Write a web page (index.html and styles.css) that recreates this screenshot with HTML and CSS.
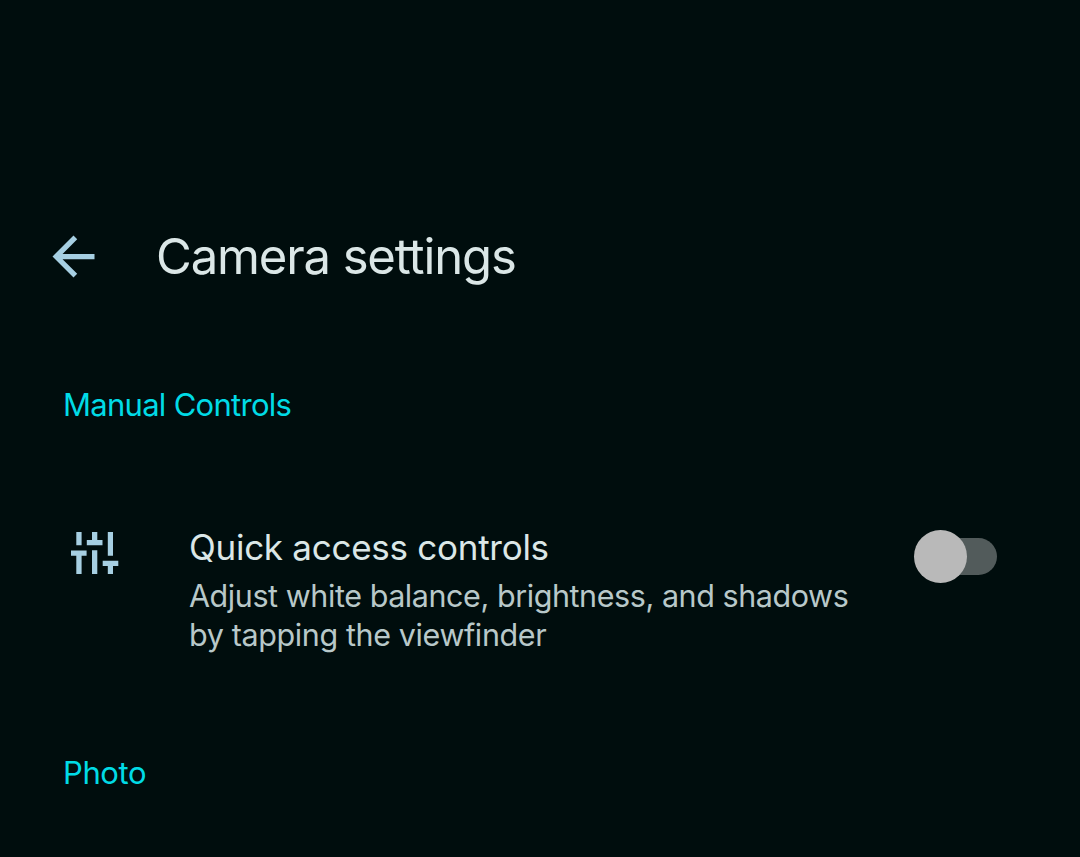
FILE: index.html
```html
<!DOCTYPE html>
<html lang="en">
<head>
<meta charset="utf-8">
<title>Camera settings</title>
<link rel="stylesheet" href="styles.css">
</head>
<body>
<main class="screen">
  <header class="app-bar">
    <svg class="back" viewBox="0 0 24 24" aria-label="Back"><path d="M20 11H7.83l5.59-5.59L12 4l-8 8 8 8 1.41-1.41L7.83 13H20z"/></svg>
    <h1 class="title">Camera settings</h1>
  </header>
  <h2 class="section section-manual">Manual Controls</h2>
  <section class="setting">
    <svg class="tune" viewBox="0 0 48 42" aria-hidden="true"><path d="M5.3 0h5.3v13.3H5.3zM0 18.5h15.6v5.2h-5v18.3H5.3V23.7H0zM21 0h5.3v8h5.2v5.3H15.8V8H21zM21 18.3h5.3V42H21zM36.8 0H42v23.7h-5.2zM31.7 28.8h15.6v5.3H42V42h-5.2v-7.9h-5.1z"/></svg>
    <div class="copy">
      <h3 class="name">Quick access controls</h3>
      <p class="description"><span class="line line-one">Adjust white balance, brightness, and shadows</span> <span class="line line-two">by tapping the viewfinder</span></p>
    </div>
    <div class="switch" role="switch" aria-checked="false" aria-label="Quick access controls"><span class="thumb"></span></div>
  </section>
  <h2 class="section section-photo">Photo</h2>
</main>
</body>
</html>
```
FILE: styles.css
```css
* { box-sizing: border-box; }
body { margin: 0; background: #000d0d; font-family: Inter, Roboto, sans-serif; }
h1, h2, h3, p { margin: 0; font-weight: 400; }
.screen { width: 1080px; height: 857px; padding-top: 225px; overflow: hidden; }
.app-bar { display: flex; align-items: center; height: 63px; padding-left: 42px; }
.back { width: 63px; height: 63px; fill: #a6cfe2; }
.title { margin-left: 51px; font-size: 49px; line-height: 63px; letter-spacing: -1.13px; color: #dbe7e7; white-space: nowrap; }
.section { padding-left: 63px; font-size: 31px; line-height: 40px; color: #00dbe6; }
.section-manual { margin-top: 97px; letter-spacing: -.72px; }
.section-photo { margin-top: 98px; letter-spacing: -.4px; }
.setting { display: flex; align-items: flex-start; height: 130px; margin-top: 100px; padding-left: 71px; }
.tune { width: 48px; height: 42px; margin-top: 6.5px; fill: #a6cfe2; }
.copy { width: 725px; margin-top: -1px; margin-left: 70px; white-space: nowrap; }
.name { font-size: 35px; line-height: 46px; color: #dbe7e7; letter-spacing: -.27px; }
.description { margin-top: 6px; font-size: 30.5px; line-height: 39px; color: #b8c8c9; }
.line { display: block; }
.line-one { letter-spacing: -.43px; }
.line-two { letter-spacing: -.38px; }
.switch { width: 79px; height: 37px; margin-top: 13px; margin-left: 4px; border-radius: 19px; background: #525b5b; position: relative; }
.thumb { position: absolute; top: -8px; left: -4px; width: 53px; height: 53px; border-radius: 50%; background: #b9b9b9; }
```
